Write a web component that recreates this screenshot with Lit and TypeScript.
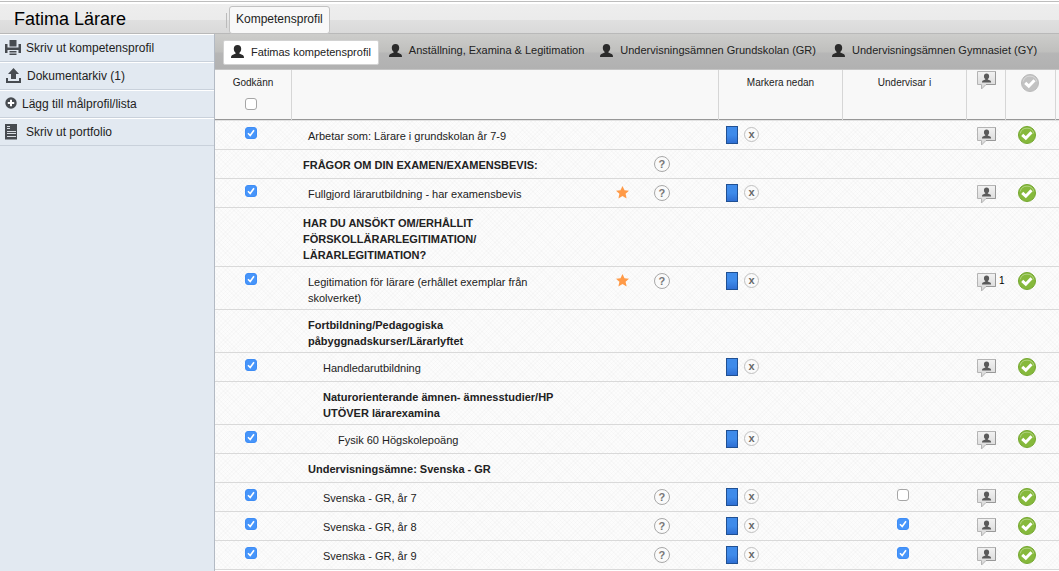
import { LitElement, html, css, svg, nothing } from "lit";
import { customElement, state } from "lit/decorators.js";

interface Row {
  text: string;
  level: 0 | 1 | 2 | 3;
  heading?: boolean;
  approved?: boolean;
  star?: boolean;
  help?: boolean;
  teaches?: boolean;
  comments?: number;
}

const rows: Row[] = [
  { text: "Arbetar som: Lärare i grundskolan år 7-9", level: 1, approved: true },
  { text: "FRÅGOR OM DIN EXAMEN/EXAMENSBEVIS:", level: 0, heading: true, help: true },
  { text: "Fullgjord lärarutbildning - har examensbevis", level: 1, approved: true, star: true, help: true },
  { text: "HAR DU ANSÖKT OM/ERHÅLLIT\nFÖRSKOLLÄRARLEGITIMATION/\nLÄRARLEGITIMATION?", level: 0, heading: true },
  { text: "Legitimation för lärare (erhållet exemplar från\nskolverket)", level: 1, approved: true, star: true, help: true, comments: 1 },
  { text: "Fortbildning/Pedagogiska\npåbyggnadskurser/Lärarlyftet", level: 1, heading: true },
  { text: "Handledarutbildning", level: 2, approved: true },
  { text: "Naturorienterande ämnen- ämnesstudier/HP\nUTÖVER lärarexamina", level: 2, heading: true },
  { text: "Fysik 60 Högskolepoäng", level: 3, approved: true },
  { text: "Undervisningsämne: Svenska - GR", level: 1, heading: true },
  { text: "Svenska - GR, år 7", level: 2, approved: true, help: true, teaches: false },
  { text: "Svenska - GR, år 8", level: 2, approved: true, help: true, teaches: true },
  { text: "Svenska - GR, år 9", level: 2, approved: true, help: true, teaches: true },
];

const tabs = [
  "Fatimas kompetensprofil",
  "Anställning, Examina & Legitimation",
  "Undervisningsämnen Grundskolan (GR)",
  "Undervisningsämnen Gymnasiet (GY)",
];

const personShape = svg`<path d="M6.5 0C8.900 0 10.200 1.600 10.200 3.800C10.200 5.600 9.500 7 8.300 7.900V8.600L11.600 9.900C12.600 10.300 13 11.400 13 13H0C0 11.400.4 10.300 1.400 9.900L4.700 8.600V7.900C3.500 7 2.800 5.600 2.800 3.800C2.800 1.600 4.100 0 6.500 0Z"/>`;
const personIcon = html`<svg class="person" width="13" height="13" viewBox="0 0 13 13" fill="#2b2b2b" aria-hidden="true">${personShape}</svg>`;

const printIcon = html`<svg width="16" height="16" viewBox="0 0 16 16" fill="#474b50" aria-hidden="true">
  <path d="M4.500 0h7v6.500h-7zM0 4h2.500v3.500h11V4H16v9h-2.500v-3h-11v3H0zM4.500 11h7v1.500h-7zM4.500 13.500h7V15h-7z"/></svg>`;
const uploadIcon = html`<svg width="17" height="16" viewBox="0 0 17 16" fill="#474b50" aria-hidden="true">
  <path d="M8.500 0l5.500 6h-3v5H6V6H3zM1 10h2v3h11v-3h2v5H1z"/></svg>`;
const plusIcon = html`<svg class="plus" width="12" height="12" viewBox="0 0 12 12" aria-hidden="true">
  <circle cx="6" cy="6" r="5.700" fill="#474b50"/><path d="M6 2.800v6.400M2.800 6h6.400" stroke="#fff" stroke-width="2"/></svg>`;
const portfolioIcon = html`<svg width="13" height="16" viewBox="0 0 13 16" aria-hidden="true">
  <path d="M0 0h12v15.500H0z" fill="#474b50"/>
  <path d="M2 2.500h3M2 4.500h3M2 7.500h9M2 9.500h9M2 12.500h9" stroke="#d8dde3"/></svg>`;

const starIcon = html`<svg class="block" width="13" height="13" viewBox="0 0 13 13" fill="#ff9a47" role="img" aria-label="Krav">
  <path d="M6.500 0l2 4.200 4.500.5-3.400 3.100 1 4.700-4.100-2.400-4.100 2.400 1-4.700L0 4.700l4.500-.5z"/></svg>`;

const noteIcon = html`<svg class="block" width="20" height="19" viewBox="0 0 20 19" aria-hidden="true">
  <defs><linearGradient id="n" x1="0" y1="0" x2="0" y2="1"><stop offset="0" stop-color="#f2f2f2"/><stop offset="1" stop-color="#d6d6d6"/></linearGradient></defs>
  <path d="M.5.5h18v13H9l-4.500 4.500V13.500H.5z" fill="url(#n)" stroke="#b4b4b4"/>
  <path d="M18.500 .5V13.500H9" fill="none" stroke="#999"/>
  <g transform="translate(5 2.500) scale(.7)" fill="#5a5a5a">${personShape}</g></svg>`;

const checkIcon = (on: boolean) => html`<svg class="block" width="18" height="18" viewBox="0 0 18 18" aria-hidden="true">
  <circle cx="9" cy="9" r="8.500" fill=${on ? "#86b93c" : "#c2c2c2"} stroke=${on ? "#74a72f" : "#bababa"}/>
  <path d="M2.200 7.500A7 7 0 0 1 15.800 7.500" fill="none" stroke="#fff" stroke-opacity=".35"/>
  <path d="M4.200 8.800l3.600 3.400 5.700-6" fill="none" stroke="#fff" stroke-width="3"/></svg>`;

@customElement("app-root")
export class AppRoot extends LitElement {
  @state() private activeTab = 0;

  static styles = css`
    :host {
      display: block;
      height: 100vh;
      overflow: hidden;
      background: #fff;
      color: #222;
      font-family: "Liberation Sans", Arial, Helvetica, sans-serif;
      font-size: 11px;
      line-height: 16px;
    }
    * { box-sizing: border-box; }
    button { font: inherit; color: inherit; cursor: pointer; padding: 0; }
    .block { display: block; }
    .page { display: flex; flex-direction: column; height: 100%; }
    .top {
      display: flex;
      flex: none;
      height: 34px;
      padding-top: 2px;
      border-bottom: 1px solid #b9b9b9;
      background: linear-gradient(#fdfdfd 0 1px, #bdbdbd 1px 2px, #fff 2px 4px, #eeeeee 4px, #ebebeb 20px, #e0e0e0 20px, #d9d9d9 33px);
    }
    .name {
      width: 215px;
      margin: 0;
      padding: 6px 0 0 14px;
      font-size: 18px;
      line-height: 22px;
      font-weight: normal;
      color: #000;
    }
    .areas { display: flex; align-items: flex-start; padding: 4px 0 0 11px; }
    .areas::before { content: ""; width: 1px; height: 15px; margin: 7px 2px 0 0; background: #bbb; }
    .area {
      height: 28px;
      padding: 0 6px 2px;
      border: 1px solid #c2c2c2;
      border-radius: 3px;
      background: #f8f8f8;
      font-size: 12px;
    }
    .body { display: flex; flex: 1; min-height: 0; }
    .side {
      flex: none;
      width: 215px;
      border-right: 1px solid #b3bac4;
      background: #e2e9f1;
    }
    .side ul { list-style: none; margin: 0; padding: 0; }
    .side li { height: 28px; border-top: 1px solid #fff; border-bottom: 1px solid #c9d1db; }
    .side a {
      display: flex;
      align-items: center;
      height: 26px;
      padding-left: 5px;
      gap: 5px;
      color: #222;
      font-size: 12px;
      text-decoration: none;
    }
    .side .wide { gap: 8px; }
    .plus { margin-bottom: 2px; }
    .main { flex: 1; min-width: 0; }
    .tabs {
      display: flex;
      align-items: flex-start;
      height: 36px;
      padding: 6px 0 0 8px;
      gap: 4px;
      border-bottom: 1px solid #c4c4c4;
      background: linear-gradient(#cdcdcb, #bfbfbd 18px, #b6b6b6 19px, #b1b1b1);
    }
    .tab {
      display: flex;
      align-items: center;
      height: 20px;
      padding: 0 6px;
      gap: 7px;
      border: 0;
      background: none;
      white-space: nowrap;
    }
    .tab.active {
      height: 25px;
      padding: 0 7px 2px;
      border: 1px solid #d2d2d2;
      border-radius: 2px;
      background: #fff;
    }
    table { width: 100%; table-layout: fixed; border-spacing: 0; }
    th, td { padding: 0; vertical-align: top; text-align: left; }
    .c-ok { width: 77px; }
    .c-star { width: 38px; }
    .c-help { width: 66px; }
    .c-mark, .c-teach { width: 124px; }
    .c-note { width: 39px; }
    .c-check { width: 50px; }
    .c-end { width: 3px; }
    th {
      height: 51px;
      border-right: 1px solid #d6d6d6;
      border-bottom: 1px solid #e2e2e2;
      box-shadow: inset 0 -1px #979797;
      background: #f8f8f8;
      font-size: 10px;
      font-weight: normal;
      text-align: center;
      padding-top: 5px;
    }
    th:last-child { border-right: 0; }
    th.h-note { padding: 1px 0 0 10px; }
    th.h-check { padding: 4px 0 0 15px; }
    tbody {
      background-color: #fcfcfc;
      background-image:
        repeating-linear-gradient(45deg, rgba(0, 0, 0, 0.016) 0 1px, transparent 1px 3px),
        repeating-linear-gradient(-45deg, rgba(0, 0, 0, 0.016) 0 1px, transparent 1px 3px);
    }
    td { height: 29px; border-bottom: 1px solid #d9d9d9; }
    .label { padding: 7px 0 3px 16px; white-space: pre-line; }
    .l0 { padding-left: 11px; }
    .l2 { padding-left: 31px; }
    .l3 { padding-left: 46px; }
    .heading { font-weight: bold; }
    .pick {
      appearance: none;
      display: block;
      width: 12px;
      height: 12px;
      margin: 6px 0 0 30px;
      border: 1px solid #a6a6a6;
      border-radius: 3px;
      background: #fff;
    }
    .pick:checked {
      border-color: #3e8df6;
      background: #4795fa url("data:image/svg+xml,%3Csvg xmlns='http://www.w3.org/2000/svg' viewBox='0 0 10 10'%3E%3Cpath d='M2 5.300l2.200 2.200L8 2.200' fill='none' stroke='white' stroke-width='1.600'/%3E%3C/svg%3E");
    }
    th .pick { margin-top: 7px; }
    .teach .pick { margin-left: 54px; }
    .star { padding: 7px 0 0 1px; }
    .help { padding: 6px 0 0 1px; }
    .round {
      display: block;
      width: 16px;
      height: 16px;
      border: 1px solid #a8a8a8;
      border-radius: 50%;
      background: #fafafa;
      color: #777;
      font-size: 11px;
      line-height: 14px;
      font-weight: bold;
      text-align: center;
    }
    .mark { display: flex; align-items: flex-start; gap: 6px; padding: 5px 0 0 7px; }
    .colour { width: 12px; height: 18px; border: 1px solid #205093; background: linear-gradient(#3f8bea 50%, #2f6fd3); }
    .clear { width: 15px; height: 15px; margin-top: 1px; border-color: #c0c0c0; color: #666; line-height: 11px; }
    .note { display: flex; gap: 2px; padding: 6px 0 0 10px; font-size: 10px; line-height: 16px; color: #000; }
    .note button, .check button { border: 0; background: none; }
    .check { padding: 5px 0 0 12px; }
  `;

  private renderRow(r: Row) {
    return html`<tr>
      <td>${r.approved ? html`<input class="pick" type="checkbox" checked aria-label="Godkänn: ${r.text}">` : nothing}</td>
      <td class="label l${r.level} ${r.heading ? "heading" : ""}">${r.text}</td>
      <td>${r.star ? html`<div class="star">${starIcon}</div>` : nothing}</td>
      <td>${r.help ? html`<div class="help"><button class="round" aria-label="Hjälp">?</button></div>` : nothing}</td>
      <td>${r.approved ? html`<div class="mark">
        <button class="colour" aria-label="Markera"></button>
        <button class="round clear" aria-label="Rensa">x</button></div>` : nothing}</td>
      <td class="teach">${r.teaches === undefined ? nothing : html`<input class="pick" type="checkbox" ?checked=${r.teaches} aria-label="Undervisar i: ${r.text}">`}</td>
      <td>${r.approved ? html`<div class="note"><button aria-label="Kommentar">${noteIcon}</button>${r.comments ? html`<span>${r.comments}</span>` : nothing}</div>` : nothing}</td>
      <td>${r.approved ? html`<div class="check"><button aria-label="Godkänd">${checkIcon(true)}</button></div>` : nothing}</td>
      <td></td>
    </tr>`;
  }

  render() {
    return html`<div class="page">
      <header class="top">
        <h1 class="name">Fatima Lärare</h1>
        <nav class="areas"><button class="area">Kompetensprofil</button></nav>
      </header>
      <div class="body">
        <aside class="side"><ul>
          <li><a href="#">${printIcon}Skriv ut kompetensprofil</a></li>
          <li><a href="#">${uploadIcon}Dokumentarkiv (1)</a></li>
          <li><a href="#">${plusIcon}Lägg till målprofil/lista</a></li>
          <li><a class="wide" href="#">${portfolioIcon}Skriv ut portfolio</a></li>
        </ul></aside>
        <main class="main">
          <nav class="tabs">${tabs.map((t, i) => html`<button class="tab ${i === this.activeTab ? "active" : ""}"
            @click=${() => (this.activeTab = i)}>${personIcon}${t}</button>`)}</nav>
          <table>
            <colgroup>
              <col class="c-ok"><col><col class="c-star"><col class="c-help"><col class="c-mark">
              <col class="c-teach"><col class="c-note"><col class="c-check"><col class="c-end">
            </colgroup>
            <thead><tr>
              <th><label>Godkänn<input class="pick" type="checkbox"></label></th>
              <th colspan="3"></th>
              <th>Markera nedan</th>
              <th>Undervisar i</th>
              <th class="h-note">${noteIcon}</th>
              <th class="h-check">${checkIcon(false)}</th>
              <th></th>
            </tr></thead>
            <tbody>${rows.map((r) => this.renderRow(r))}</tbody>
          </table>
        </main>
      </div>
    </div>`;
  }
}
